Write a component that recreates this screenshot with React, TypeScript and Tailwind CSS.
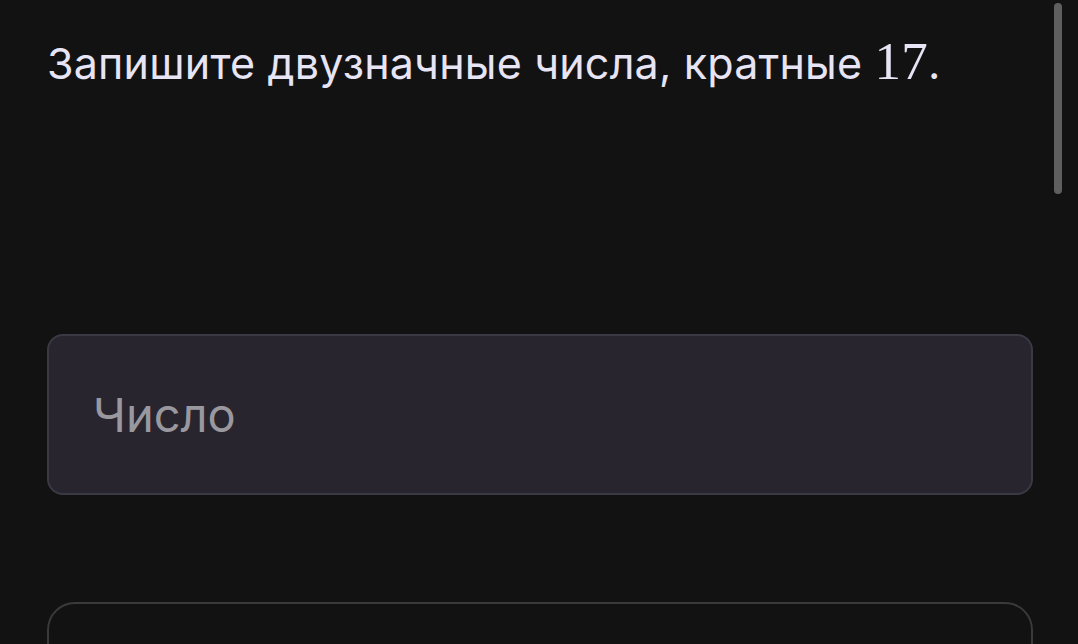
export default function App() {
  return (
    <div className="relative min-h-screen h-[644px] overflow-hidden bg-[#121212] font-['Inter','Noto_Sans',sans-serif]">
      <div className="pl-[47px] pr-[45px] pt-[35px]">
        <h1 className="text-[43px] leading-[56px] font-normal text-[#e6e4f5] tracking-[0.2px]">
          Запишите двузначные числа, кратные{" "}
          <span className="font-['Liberation_Serif','DejaVu_Serif',serif] text-[53px] leading-[40px]">17</span>.
        </h1>

        <div className="mt-[243px] flex flex-col gap-[107px]">
          <input
            type="text"
            placeholder="Число"
            className="w-full h-[161px] rounded-[16px] border-2 border-[#3b3a44] bg-[#28252f] px-[44px] text-[47px] text-[#e6e4f5] placeholder:text-[#9a989f] outline-none"
          />
          <div className="w-full h-[160px] rounded-[28px] border-2 border-[#3a3a3a] bg-[#121212]" />
        </div>
      </div>

      <div className="absolute right-[16px] top-[3px] w-[8px] h-[191px] rounded-full bg-[#5f5f5f]" />
    </div>
  );
}
